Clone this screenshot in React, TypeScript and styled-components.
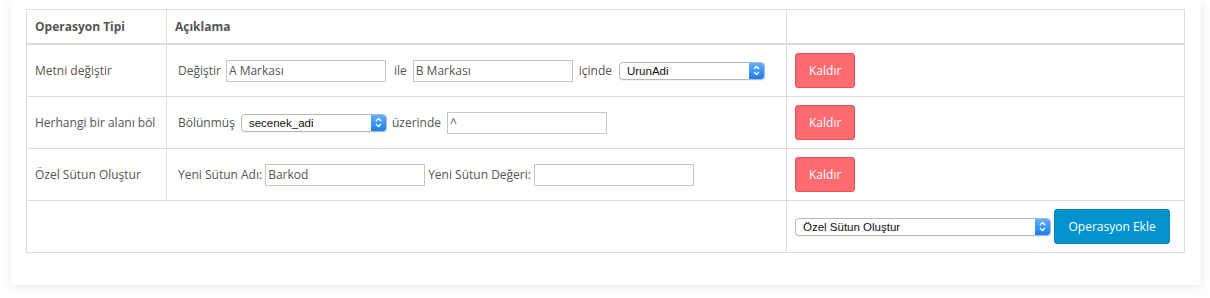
import React from 'react';
import styled, { createGlobalStyle } from 'styled-components';

const GlobalStyle = createGlobalStyle`
  body {
    margin: 0;
    background: #fff;
    font-family: 'Open Sans', 'DejaVu Sans', sans-serif;
    font-size: 12px;
    color: #555;
  }
`;

const Page = styled.div`
  padding: 0 9px 13px 11px;
`;

const Card = styled.div`
  background: #fff;
  padding: 9px 16px 32px 15px;
  box-shadow: 0 2px 10px rgba(0, 0, 0, 0.09);
`;

const Table = styled.table`
  width: 100%;
  border-collapse: collapse;
  table-layout: fixed;
  border: 1px solid #ddd;
`;

const Th = styled.th`
  text-align: left;
  font-weight: 700;
  color: #555;
  padding: 8px;
  line-height: 17px;
  border: 1px solid #ddd;
  border-bottom-width: 2px;
`;

const Td = styled.td`
  padding: 8px;
  line-height: 18px;
  vertical-align: middle;
  white-space: nowrap;
  border: 1px solid #ddd;
`;

const Line = styled.div<{ $indent?: number }>`
  display: flex;
  align-items: center;
  padding-left: ${p => p.$indent ?? 0}px;
  white-space: nowrap;
`;

const Label = styled.span<{ $ml?: number }>`
  margin-left: ${p => p.$ml ?? 0}px;
`;

const TextInput = styled.input<{ $ml?: number }>`
  box-sizing: border-box;
  width: 160px;
  height: 22px;
  margin: 0 0 0 ${p => p.$ml ?? 0}px;
  padding: 0 2px;
  border: 1px solid #c6c6c6;
  border-radius: 0;
  font-family: 'Open Sans', sans-serif;
  font-size: 12px;
  color: #555;
  background: #fff;
  outline: none;
`;

const SelectBox = styled.span<{ $w: number; $ml?: number }>`
  display: inline-flex;
  align-items: stretch;
  box-sizing: border-box;
  width: ${p => p.$w}px;
  height: 18px;
  margin-left: ${p => p.$ml ?? 0}px;
  border: 1px solid #b8b8b8;
  border-radius: 4px;
  background: #fff;
  box-shadow: 0 1px 1px rgba(0, 0, 0, 0.06);
  overflow: hidden;
`;

const NativeSelect = styled.select`
  appearance: none;
  -webkit-appearance: none;
  flex: 1;
  min-width: 0;
  height: 100%;
  border: 0;
  padding: 0 0 0 7px;
  background: transparent;
  font-family: 'Liberation Sans', Arial, sans-serif;
  font-size: 11.5px;
  color: #111;
  outline: none;
`;

const Stepper = styled.span`
  display: flex;
  align-items: center;
  justify-content: center;
  width: 15px;
  background: linear-gradient(#62b0ff, #1c7ff4);
`;

const Button = styled.button<{ $variant: 'danger' | 'info'; $ml?: number }>`
  height: 35px;
  margin-left: ${p => p.$ml ?? 0}px;
  padding: 0 ${p => (p.$variant === 'info' ? 13.5 : 13)}px;
  border-radius: 3px;
  border: 1px solid ${p => (p.$variant === 'info' ? '#0182ba' : '#e8505a')};
  background: ${p => (p.$variant === 'info' ? '#0192cf' : '#ff6b71')};
  color: #fff;
  font-family: 'Open Sans', sans-serif;
  font-size: 12px;
  cursor: pointer;
`;

const Chevrons = () => (
  <svg width="7" height="11" viewBox="0 0 7 11">
    <path d="M1 4 L3.5 1.5 L6 4 M1 7 L3.5 9.5 L6 7" fill="none" stroke="#fff" strokeWidth="1.3" />
  </svg>
);

const Select = ({ value, w, ml }: { value: string; w: number; ml?: number }) => (
  <SelectBox $w={w} $ml={ml}>
    <NativeSelect defaultValue={value}>
      <option>{value}</option>
    </NativeSelect>
    <Stepper>
      <Chevrons />
    </Stepper>
  </SelectBox>
);

export default function App() {
  return (
    <Page>
      <GlobalStyle />
      <Card>
        <Table>
          <colgroup>
            <col style={{ width: 140 }} />
            <col style={{ width: 620 }} />
            <col />
          </colgroup>
          <thead>
            <tr>
              <Th>Operasyon Tipi</Th>
              <Th>Açıklama</Th>
              <Th />
            </tr>
          </thead>
          <tbody>
            <tr>
              <Td>Metni değiştir</Td>
              <Td>
                <Line $indent={3}>
                  <Label>Değiştir</Label>
                  <TextInput $ml={5} defaultValue="A Markası" />
                  <Label $ml={8}>ile</Label>
                  <TextInput $ml={6} defaultValue="B Markası" />
                  <Label $ml={6}>içinde</Label>
                  <Select value="UrunAdi" w={146} ml={7} />
                </Line>
              </Td>
              <Td>
                <Button $variant="danger">Kaldır</Button>
              </Td>
            </tr>
            <tr>
              <Td>Herhangi bir alanı böl</Td>
              <Td>
                <Line $indent={3}>
                  <Label>Bölünmüş</Label>
                  <Select value="secenek_adi" w={146} ml={6} />
                  <Label $ml={5}>üzerinde</Label>
                  <TextInput $ml={6} defaultValue="^" />
                </Line>
              </Td>
              <Td>
                <Button $variant="danger">Kaldır</Button>
              </Td>
            </tr>
            <tr>
              <Td>Özel Sütun Oluştur</Td>
              <Td>
                <Line $indent={3}>
                  <Label>Yeni Sütun Adı:</Label>
                  <TextInput $ml={3} defaultValue="Barkod" />
                  <Label $ml={3}>Yeni Sütun Değeri:</Label>
                  <TextInput $ml={3} defaultValue="" />
                </Line>
              </Td>
              <Td>
                <Button $variant="danger">Kaldır</Button>
              </Td>
            </tr>
            <tr>
              <Td colSpan={2} />
              <Td>
                <Line>
                  <Select value="Özel Sütun Oluştur" w={256} />
                  <Button $variant="info" $ml={3}>Operasyon Ekle</Button>
                </Line>
              </Td>
            </tr>
          </tbody>
        </Table>
      </Card>
    </Page>
  );
}
